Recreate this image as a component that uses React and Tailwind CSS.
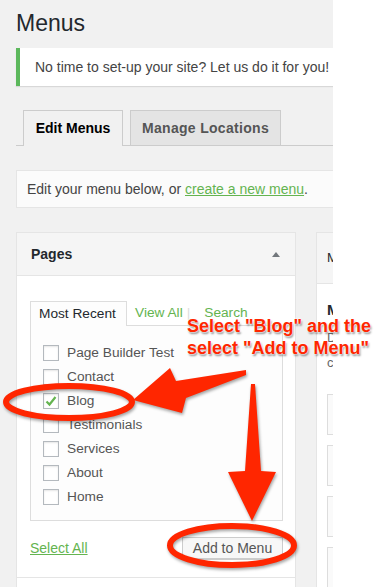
import React from "react";

const pages = ["Page Builder Test", "Contact", "Blog", "Testimonials", "Services", "About", "Home"];

const Checkbox = ({ checked }) => (
  <span className="w-4 h-4 shrink-0 border border-[#b4b9be] bg-white shadow-[inset_0_1px_2px_rgba(0,0,0,0.1)] flex items-center justify-center">
    {checked && (
      <svg width="14" height="14" viewBox="0 0 14 14">
        <path d="M2.5 7.5 L5.5 10.5 L11.5 3" fill="none" stroke="#64b450" strokeWidth="2.2" />
      </svg>
    )}
  </span>
);

export default function App() {
  return (
    <div className="relative w-[384px] h-[587px] bg-white overflow-hidden font-['Liberation_Sans',Arial,sans-serif] text-[#444]">
      <div className="w-[333px] h-full bg-[#f1f1f1] overflow-hidden">
        <div className="w-[440px] pl-4">
          <h1 className="pt-[9px] text-[23px] leading-[29px] text-[#23282d]">Menus</h1>

          {/* notice */}
          <div className="mt-[10px] h-[38px] bg-white border-l-4 border-[#5cb85c] shadow-[0_1px_1px_rgba(0,0,0,0.1)] flex items-center pl-[15px] text-[14px] text-[#444] whitespace-nowrap">
            No time to set-up your site? Let us do it for you!
          </div>

          {/* tabs */}
          <div className="mt-6 h-[36px] flex items-end gap-[7px] pl-[7px] border-b border-[#ccc]">
            <div className="h-[36px] w-[100px] -mb-px border border-b-0 border-[#ccc] bg-[#f1f1f1] flex items-center justify-center text-[14px] font-bold text-black">
              Edit Menus
            </div>
            <div className="h-[35px] w-[151px] border border-b-0 border-[#ccc] bg-[#e4e4e4] flex items-center justify-center text-[14px] font-bold text-[#555] tracking-[0.3px]">
              Manage Locations
            </div>
          </div>

          {/* edit box */}
          <div className="mt-6 h-[38px] border border-[#e5e5e5] bg-[#fbfbfb] flex items-center px-[10px] text-[14px] text-[#444] whitespace-nowrap">
            Edit your menu below, or&nbsp;
            <span className="text-[#64b450] underline">create a new menu</span>.
          </div>

          {/* columns */}
          <div className="mt-6 flex gap-5 items-start">
            <div className="w-[280px] h-[400px] border border-[#e5e5e5] bg-white">
              <div className="h-[43px] bg-[#f5f5f5] border-b border-[#e5e5e5] flex items-center justify-between pl-[14px] pr-[15px]">
                <span className="text-[14px] font-bold text-[#23282d]">Pages</span>
                <svg width="8" height="5" viewBox="0 0 8 5">
                  <path d="M0 5 L4 0 L8 5 Z" fill="#72777c" />
                </svg>
              </div>
              <div className="pt-[25px] pl-[13px] pr-[12px]">
                <div className="flex items-end text-[13.7px] h-[24px]">
                  <div className="relative z-10 -mb-px h-[25px] w-[97px] border border-b-0 border-[#ddd] bg-[#fdfdfd] pl-[8px] flex items-center text-[#23282d]">
                    Most Recent
                  </div>
                  <div className="h-[24px] flex items-center pl-[8px] text-[#64b450]">
                    View All
                    <span className="ml-[4px] mr-[14px] text-[#ddd]">|</span>
                    Search
                  </div>
                </div>
                <div className="h-[196px] border border-[#ddd] bg-[#fdfdfd] pt-[15px] pl-[12px]">
                  {pages.map((p) => (
                    <div key={p} className="h-[24px] flex items-center gap-2 text-[13.7px] text-[#555]">
                      <Checkbox checked={p === "Blog"} />
                      {p}
                    </div>
                  ))}
                </div>
                <div className="pt-4 pb-[18px] flex items-center justify-between">
                  <span className="text-[14px] text-[#64b450] underline">Select All</span>
                  <div className="h-[22px] w-[101px] border border-[#ccc] bg-[#f7f7f7] shadow-[0_1px_0_#ccc] flex items-center justify-center text-[14px] text-[#555]">
                    Add to Menu
                  </div>
                </div>
              </div>
              <div className="-mx-px border-t border-[#e5e5e5]" />
            </div>

            <div className="w-[120px] h-[400px] border border-[#e5e5e5] bg-white">
              <div className="h-[51px] bg-[#f5f5f5] border-b border-[#e5e5e5] flex items-center pl-[10px] text-[13px] text-[#23282d] whitespace-nowrap">
                Menu Name
              </div>
              <div className="pl-[10px] pt-[16px]">
                <div className="text-[15px] font-bold text-[#23282d] leading-[20px] whitespace-nowrap">Menu Structure</div>
                <div className="mt-[5px] text-[13px] leading-[25px] text-[#666] whitespace-nowrap">
                  Drag each item
                  <br />
                  click the arrow
                </div>
                <div className="mt-[19px] flex flex-col gap-[10px]">
                  <div className="h-[41px] border border-[#ddd] bg-[#fafafa]" />
                  <div className="h-[41px] border border-[#ddd] bg-[#fafafa]" />
                  <div className="h-[41px] border border-[#ddd] bg-[#fafafa]" />
                  <div className="h-[41px] border border-[#ddd] bg-[#fafafa]" />
                </div>
              </div>
            </div>
          </div>
        </div>
      </div>

      {/* annotations */}
      <svg className="absolute left-0 top-0 drop-shadow-[1px_2px_1.5px_rgba(0,0,0,0.35)]" width="384" height="587" viewBox="0 0 384 587">
        <ellipse cx="69" cy="402" rx="63" ry="16" fill="none" stroke="#ff2600" strokeWidth="6" />
        <ellipse cx="232" cy="545.5" rx="62" ry="19.5" fill="none" stroke="#ff2600" strokeWidth="6" />
        <path d="M133 400 L170 368 L176 381 L246 370 L246 375 L186 398 L182 413 Z" fill="#ff2600" />
        <path d="M251 384 L255 384 L261 471 L276 472 L252 521 L228 472 L245 471 Z" fill="#ff2600" />
      </svg>
      <div className="absolute left-[187px] top-[315px] text-[18px] leading-[22px] font-bold text-[#ff2600] whitespace-nowrap [text-shadow:0_0_2px_#fff,0_0_2px_#fff,1px_2px_2px_rgba(0,0,0,0.45)]">
        Select "Blog" and the
        <br />
        select "Add to Menu"
      </div>
    </div>
  );
}
